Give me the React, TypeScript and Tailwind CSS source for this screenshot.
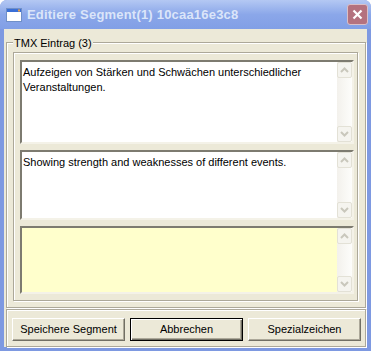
import React from 'react'

const sunken =
  'border-2 border-t-[#7d7b70] border-l-[#7d7b70] border-b-[#f4f2e8] border-r-[#f4f2e8]'

function ScrollBtn({ dir }: { dir: 'up' | 'down' }) {
  return (
    <div className="w-[15px] h-[16px] rounded-[2px] border border-[#e3e1d6] bg-[#f5f4ef] flex items-center justify-center">
      <svg width="9" height="6" viewBox="0 0 9 6">
        <path
          d={dir === 'up' ? 'M1 5 L4.5 1.5 L8 5' : 'M1 1 L4.5 4.5 L8 1'}
          fill="none"
          stroke="#c9c7bc"
          strokeWidth="2"
        />
      </svg>
    </div>
  )
}

function Memo({ h, bg, text }: { h: string; bg: string; text?: string }) {
  return (
    <div className={`${h} ${bg} ${sunken} flex`}>
      <div className="flex-1 pl-[1px] pt-[3px] pr-2 text-[11px] leading-[15px] text-black">{text}</div>
      <div className="w-[15px] flex flex-col justify-between bg-gradient-to-r from-[#f3f1ec] to-[#fdfdfb]">
        <ScrollBtn dir="up" />
        <ScrollBtn dir="down" />
      </div>
    </div>
  )
}

function Button({ label, primary }: { label: string; primary?: boolean }) {
  const cls = primary
    ? 'border border-black shadow-[inset_1px_1px_0_#fff,inset_-1px_-1px_0_#716f64,inset_-2px_-2px_0_#aca899]'
    : 'border border-t-white border-l-white border-b-[#716f64] border-r-[#716f64] shadow-[inset_-1px_-1px_0_#aca899]'
  return (
    <div className={`w-[113px] h-[23px] bg-[#ece9d8] flex items-center justify-center text-[11px] text-black ${cls}`}>
      {label}
    </div>
  )
}

export default function App() {
  return (
    <div className="w-[372px] h-[358px] bg-white overflow-hidden font-['Liberation_Sans',Arial,sans-serif]">
      {/* Window */}
      <div className="w-[371px] h-[351px] flex flex-col bg-[#7e99e1] rounded-t-[7px] overflow-hidden">
        {/* Title bar */}
        <div className="h-[29px] shrink-0 flex items-center pl-[6px] pr-[3px] bg-gradient-to-b from-[#b4c8f3] via-[#8ba7e9] to-[#819fe6]">
          <svg width="16" height="14" viewBox="0 0 16 14" className="shrink-0">
            <rect x="0.5" y="0.5" width="15" height="13" fill="#fff" stroke="#6f8fc8" />
            <rect x="1" y="1" width="14" height="3" fill="#3a6fd6" />
            <rect x="12" y="1.5" width="2" height="2" fill="#f0a040" />
          </svg>
          <span className="ml-[5px] font-bold text-[13px] text-[#dbe5f9] tracking-[0.2px]">
            Editiere Segment(1) 10caa16e3c8
          </span>
          <div className="ml-auto w-[21px] h-[21px] rounded-[3px] border border-[#d9c0c8] bg-[#b4727f] flex items-center justify-center">
            <svg width="11" height="11" viewBox="0 0 11 11">
              <path d="M1.5 1.5 L9.5 9.5 M9.5 1.5 L1.5 9.5" stroke="#fff" strokeWidth="2.2" />
            </svg>
          </div>
        </div>

        {/* Client area */}
        <div className="flex-1 mx-[4px] mb-[4px] bg-[#ece9d8] flex flex-col pl-[2px] pr-[1px] pt-[13px]">
          {/* Group box */}
          <div className="relative h-[266px] border border-[#aca899] shadow-[inset_1px_1px_0_#fff,1px_1px_0_#fff] pt-[9px] pl-[6px] pr-[7px] pb-[6px]">
            <span className="absolute left-[6px] -top-[7px] px-[1px] bg-[#ece9d8] text-[11px] leading-[14px] text-black">
              TMX Eintrag (3)
            </span>
            <div className="h-full border border-[#aca899] shadow-[inset_1px_1px_0_#fff,1px_1px_0_#fff] pt-[7px] pl-[6px] pr-[3px] flex flex-col gap-[6px]">
              <Memo
                h="h-[84px]"
                bg="bg-white"
                text="Aufzeigen von Stärken und Schwächen unterschiedlicher Veranstaltungen."
              />
              <Memo h="h-[70px]" bg="bg-white" text="Showing strength and weaknesses of different events." />
              <Memo h="h-[68px]" bg="bg-[#ffffcc]" />
            </div>
          </div>

          {/* Button panel */}
          <div className="flex-1 mt-[1px] border border-[#aca899] shadow-[inset_1px_1px_0_#fff,1px_1px_0_#fff] flex items-start pt-[8px] pl-[5px] gap-[5px]">
            <Button label="Speichere Segment" />
            <Button label="Abbrechen" primary />
            <Button label="Spezialzeichen" />
          </div>
        </div>
      </div>
    </div>
  )
}
